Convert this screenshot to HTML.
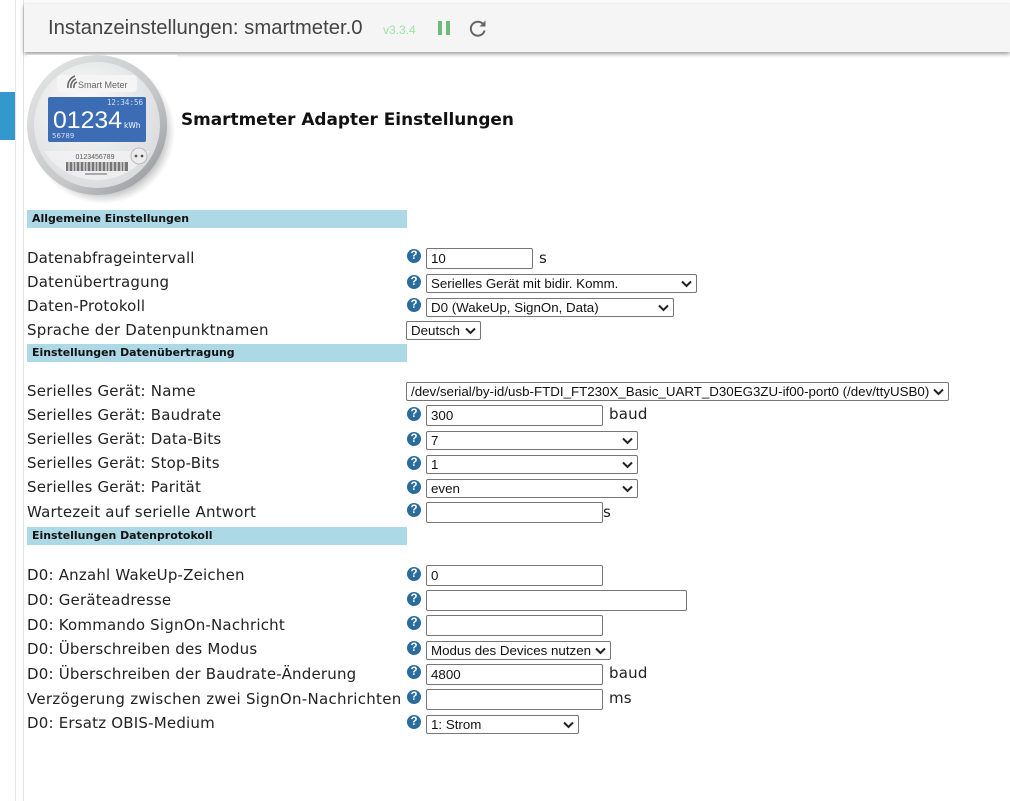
<!DOCTYPE html>
<html lang="de"><head><meta charset="utf-8"><title>Instanzeinstellungen</title>
<style>
html,body{margin:0;padding:0;background:#fff;}
body{position:relative;width:1010px;height:801px;overflow:hidden;font-family:"DejaVu Sans",sans-serif;color:#222;}
.a{position:absolute;}
.l{position:absolute;left:27px;font-size:15px;line-height:20px;white-space:nowrap;color:#222;letter-spacing:.2px;}
.u{position:absolute;font-size:15px;line-height:20px;white-space:nowrap;color:#222;letter-spacing:.2px;}
.h{position:absolute;left:27px;width:380px;height:18px;background:#add8e6;font-size:10.95px;font-weight:bold;line-height:17px;text-indent:5px;color:#111;}
.q{position:absolute;left:407px;width:14px;height:14px;margin-top:1px;border-radius:50%;background:#2a6c9b;color:#fff;font:bold 11.5px/14px "Liberation Sans",sans-serif;text-align:center;}
.i,.s{position:absolute;box-sizing:border-box;border:1px solid #767676;border-radius:2px;background:#fff;font:13.33px "Liberation Sans",sans-serif;color:#111;white-space:nowrap;overflow:hidden;}
.i{left:426px;height:21px;line-height:19px;padding-left:4px;}
.s{height:19px;line-height:17px;padding-left:4px;}
.s svg{position:absolute;right:4px;top:5px;}
</style></head><body>
<div class="a" style="left:15px;top:0;width:1px;height:801px;background:#e6e6e6"></div>
<div class="a" style="left:23px;top:0;width:1px;height:801px;background:#e2e2e2"></div>
<div class="a" style="left:0;top:92px;width:15px;height:48px;background:#3399cc"></div>
<div class="a" style="left:24px;top:0;width:986px;height:4px;background:#fafafa"></div>
<div class="a" style="left:24px;top:4px;width:986px;height:48px;background:#f5f5f5;box-shadow:0 2px 4px rgba(0,0,0,.4)"></div>
<div class="a" style="left:48px;top:15px;font:20.3px/26px 'Liberation Sans',sans-serif;color:#444;white-space:nowrap">Instanzeinstellungen: smartmeter.0</div>
<div class="a" style="left:383px;top:23px;font:12px/14px 'Liberation Sans',sans-serif;color:#9be6a5">v3.3.4</div>
<div class="a" style="left:438px;top:21px;width:4px;height:14px;background:#6cbb78"></div>
<div class="a" style="left:446px;top:21px;width:4px;height:14px;background:#6cbb78"></div>
<svg class="a" style="left:468px;top:18px" width="20" height="20" viewBox="0 0 20 20"><path d="M15.2 6.2A7 7 0 1 0 16.6 12.5" fill="none" stroke="#666" stroke-width="2"/><path d="M17.5 2.5V8.5H11.5Z" fill="#666"/></svg>

<div class="a" style="left:27px;top:55px;width:150px;height:148px;background:#fff"></div>
<svg class="a" style="left:27px;top:55px" width="150" height="148" viewBox="0 0 150 148">
<defs><linearGradient id="g" x1="0" y1="0" x2="1" y2="1"><stop offset="0" stop-color="#e8e8e8"/><stop offset=".6" stop-color="#c4c6c8"/><stop offset="1" stop-color="#8f9295"/></linearGradient>
<radialGradient id="f" cx=".4" cy=".35" r=".8"><stop offset="0" stop-color="#fbfbfb"/><stop offset="1" stop-color="#d5d6d8"/></radialGradient>
<radialGradient id="sh" cx=".5" cy=".5" r=".5"><stop offset=".8" stop-color="#777" stop-opacity=".6"/><stop offset="1" stop-color="#999" stop-opacity="0"/></radialGradient></defs>
<circle cx="76" cy="77" r="72" fill="url(#sh)"/>
<circle cx="70" cy="70" r="70" fill="url(#g)"/>
<circle cx="70" cy="70" r="63" fill="url(#f)"/>
<rect x="30" y="20" width="80" height="17" rx="4" fill="#f5f5f5"/>
<path d="M41 33a11 11 0 0 1 7-12M44 33a8 8 0 0 1 5-9M47 33a5 5 0 0 1 3-6" stroke="#666" stroke-width="1.6" fill="none"/>
<text x="51" y="33" font-family="Liberation Sans" font-size="9" fill="#666">Smart Meter</text>
<rect x="21" y="42" width="98" height="45" rx="2" fill="#3c6cb4"/>
<text x="116" y="50" text-anchor="end" font-family="DejaVu Sans Mono" font-size="7.500" fill="#cfe0f5">12:34:56</text>
<text x="26" y="73" font-family="Liberation Sans" font-size="24" fill="#fff" textLength="69" lengthAdjust="spacingAndGlyphs">01234</text>
<text x="97" y="73" font-family="DejaVu Sans" font-size="7.500" fill="#fff">kWh</text>
<text x="25" y="83" font-family="DejaVu Sans" font-size="7" fill="#cfe0f5">56789</text>
<path d="M17 96h106a63 63 0 0 1-106 0Z" fill="#f4f4f5" opacity=".7"/>
<text x="68" y="104" text-anchor="middle" font-family="Liberation Sans" font-size="7" fill="#555">0123456789</text>
<circle cx="112" cy="101" r="8" fill="#ececec" stroke="#bbb"/><circle cx="109" cy="101" r="1.4" fill="#555"/><circle cx="115" cy="101" r="1.4" fill="#555"/>
<rect x="39" y="107" width="62" height="9" fill="#777"/>
<path d="M42 107v9M46 107v9M49 107v9M53 107v9M57 107v9M60 107v9M64 107v9M68 107v9M71 107v9M75 107v9M79 107v9M82 107v9M86 107v9M90 107v9M94 107v9M97 107v9" stroke="#eee" stroke-width="1.2"/>
<rect x="58" y="118" width="22" height="2" fill="#aaa"/>
</svg>
<div class="a" style="left:181px;top:107px;font:bold 16.9px/24px 'DejaVu Sans',sans-serif;color:#111;white-space:nowrap">Smartmeter Adapter Einstellungen</div>

<div class="h" style="top:210px">Allgemeine Einstellungen</div>
<div class="l" style="top:248px;letter-spacing:.13px">Datenabfrageintervall</div>
<div class="q" style="top:248px">?</div><div class="i" style="top:248px;width:107px">10</div><div class="u" style="left:539px;top:248px">s</div>
<div class="l" style="top:272px">Datenübertragung</div>
<div class="q" style="top:274px">?</div><div class="s" style="left:426px;top:274px;width:271px">Serielles Gerät mit bidir. Komm.<svg width="11" height="8" viewBox="0 0 11 8"><path d="M1 1.5l4.500 4.500 4.500-4.500" fill="none" stroke="#222" stroke-width="2"/></svg></div>
<div class="l" style="top:296px">Daten-Protokoll</div>
<div class="q" style="top:297px">?</div><div class="s" style="left:426px;top:298px;width:248px">D0 (WakeUp, SignOn, Data)<svg width="11" height="8" viewBox="0 0 11 8"><path d="M1 1.5l4.500 4.500 4.500-4.500" fill="none" stroke="#222" stroke-width="2"/></svg></div>
<div class="l" style="top:320px">Sprache der Datenpunktnamen</div>
<div class="s" style="left:406px;top:321px;width:75px">Deutsch<svg width="11" height="8" viewBox="0 0 11 8"><path d="M1 1.5l4.500 4.500 4.500-4.500" fill="none" stroke="#222" stroke-width="2"/></svg></div>

<div class="h" style="top:344px">Einstellungen Datenübertragung</div>
<div class="l" style="top:381px">Serielles Gerät: Name</div>
<div class="s" style="left:406px;top:382px;width:543px">/dev/serial/by-id/usb-FTDI_FT230X_Basic_UART_D30EG3ZU-if00-port0 (/dev/ttyUSB0)<svg width="11" height="8" viewBox="0 0 11 8"><path d="M1 1.5l4.500 4.500 4.500-4.500" fill="none" stroke="#222" stroke-width="2"/></svg></div>
<div class="l" style="top:405px">Serielles Gerät: Baudrate</div>
<div class="q" style="top:406px">?</div><div class="i" style="top:405px;width:177px">300</div><div class="u" style="left:609px;top:404px">baud</div>
<div class="l" style="top:429px">Serielles Gerät: Data-Bits</div>
<div class="q" style="top:431px">?</div><div class="s" style="left:426px;top:431px;width:212px">7<svg width="11" height="8" viewBox="0 0 11 8"><path d="M1 1.5l4.500 4.500 4.500-4.500" fill="none" stroke="#222" stroke-width="2"/></svg></div>
<div class="l" style="top:453px">Serielles Gerät: Stop-Bits</div>
<div class="q" style="top:455px">?</div><div class="s" style="left:426px;top:455px;width:212px">1<svg width="11" height="8" viewBox="0 0 11 8"><path d="M1 1.5l4.500 4.500 4.500-4.500" fill="none" stroke="#222" stroke-width="2"/></svg></div>
<div class="l" style="top:477px">Serielles Gerät: Parität</div>
<div class="q" style="top:479px">?</div><div class="s" style="left:426px;top:479px;width:212px">even<svg width="11" height="8" viewBox="0 0 11 8"><path d="M1 1.5l4.500 4.500 4.500-4.500" fill="none" stroke="#222" stroke-width="2"/></svg></div>
<div class="l" style="top:502px">Wartezeit auf serielle Antwort</div>
<div class="q" style="top:502px">?</div><div class="i" style="top:502px;width:177px"></div><div class="u" style="left:603px;top:502px">s</div>

<div class="h" style="top:527px">Einstellungen Datenprotokoll</div>
<div class="l" style="top:565px">D0: Anzahl WakeUp-Zeichen</div>
<div class="q" style="top:566px">?</div><div class="i" style="top:565px;width:177px">0</div>
<div class="l" style="top:590px">D0: Geräteadresse</div>
<div class="q" style="top:591px">?</div><div class="i" style="top:590px;width:261px"></div>
<div class="l" style="top:615px">D0: Kommando SignOn-Nachricht</div>
<div class="q" style="top:615px">?</div><div class="i" style="top:615px;width:177px"></div>
<div class="l" style="top:639px">D0: Überschreiben des Modus</div>
<div class="q" style="top:640px">?</div><div class="s" style="left:426px;top:641px;width:185px">Modus des Devices nutzen<svg width="11" height="8" viewBox="0 0 11 8"><path d="M1 1.5l4.500 4.500 4.500-4.500" fill="none" stroke="#222" stroke-width="2"/></svg></div>
<div class="l" style="top:664px">D0: Überschreiben der Baudrate-Änderung</div>
<div class="q" style="top:664px">?</div><div class="i" style="top:664px;width:177px">4800</div><div class="u" style="left:609px;top:663px">baud</div>
<div class="l" style="top:689px;letter-spacing:.29px">Verzögerung zwischen zwei SignOn-Nachrichten</div>
<div class="q" style="top:689px">?</div><div class="i" style="top:689px;width:177px"></div><div class="u" style="left:609px;top:688px">ms</div>
<div class="l" style="top:713px">D0: Ersatz OBIS-Medium</div>
<div class="q" style="top:714px">?</div><div class="s" style="left:426px;top:715px;width:153px">1: Strom<svg width="11" height="8" viewBox="0 0 11 8"><path d="M1 1.5l4.500 4.500 4.500-4.500" fill="none" stroke="#222" stroke-width="2"/></svg></div>
</body></html>
